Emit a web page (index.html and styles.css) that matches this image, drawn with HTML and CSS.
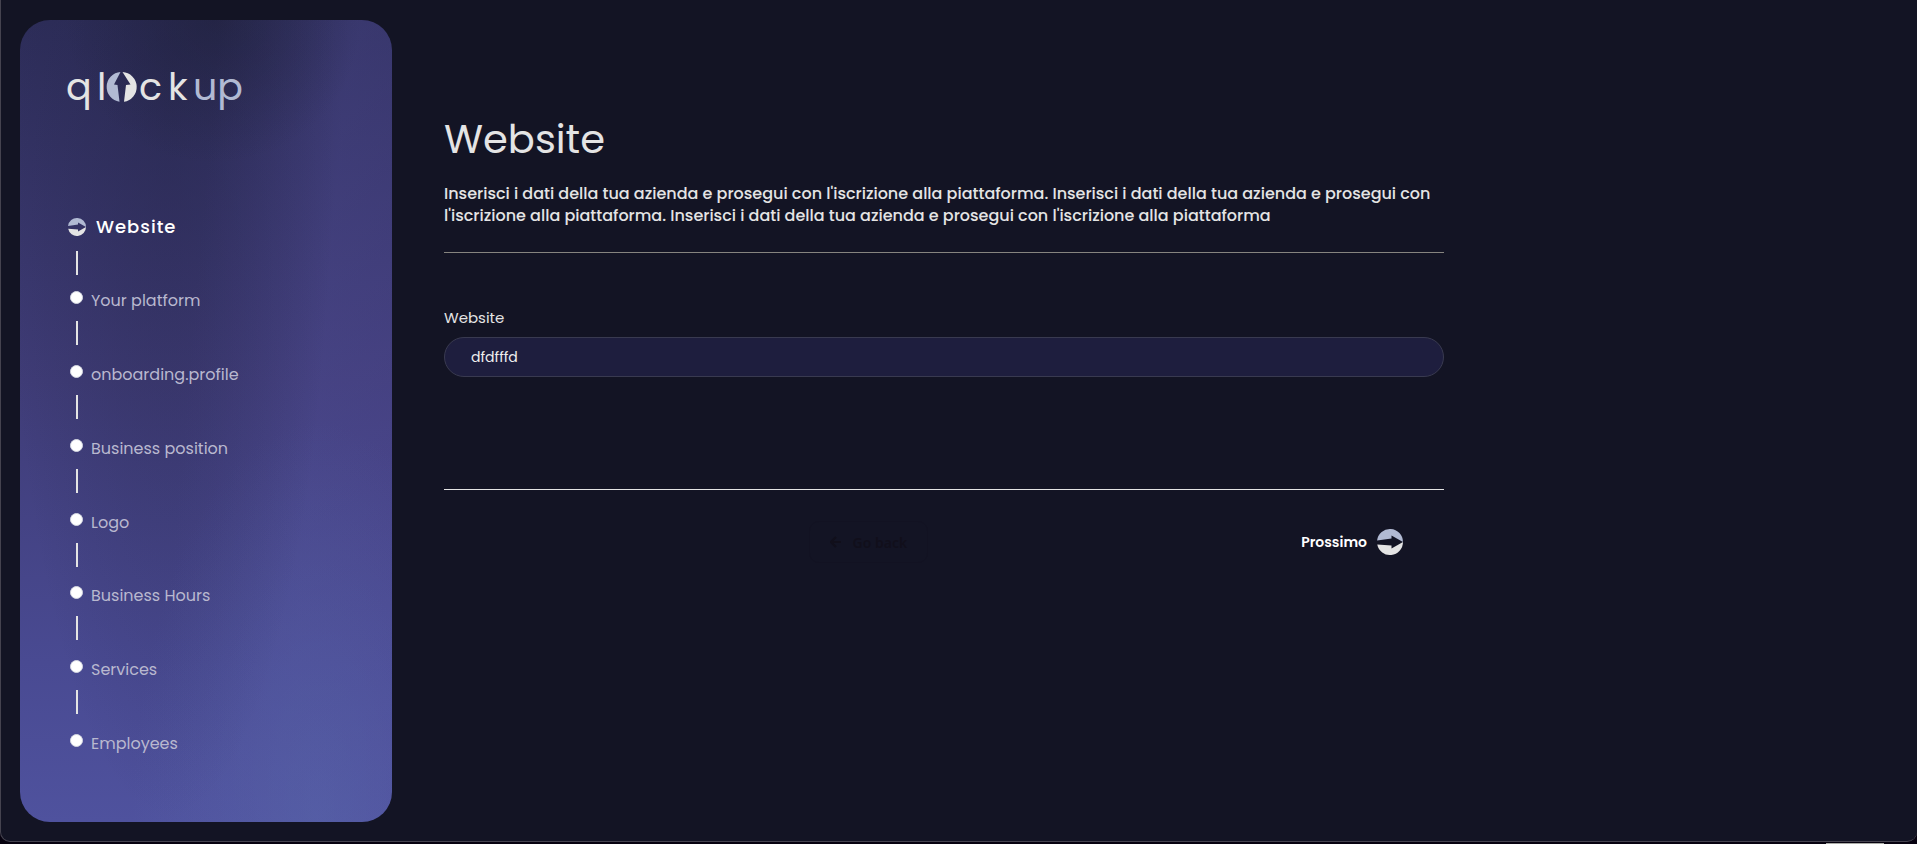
FILE: index.html
```html
<!DOCTYPE html>
<html lang="it">
<head>
    <meta charset="UTF-8">
    <meta name="viewport" content="width=device-width, initial-scale=1.0">
    <title>Qlockup - Website</title>
    <link rel="stylesheet" href="styles.css">
</head>
<body>
    <svg class="sprite" aria-hidden="true">
        <symbol id="arrow-ball" viewBox="0 0 26 26">
            <path class="ball-top" d="M0.087 11.5A13 13 0 0 1 26 13L14.500 6.500V9.500Z"/>
            <path class="ball-bottom" d="M26 13A13 13 0 0 1 0.243 15.500L14.500 16.500V19.500Z"/>
        </symbol>
    </svg>

    <div class="window">
        <aside class="sidebar">
            <svg class="logo" viewBox="0 0 178 44" role="img" aria-label="qlockup">
                <text class="logo-light" x="0" y="34">q</text>
                <text class="logo-light" x="31" y="34">l</text>
                <path class="logo-up" d="M54.500 6A15 15 0 0 0 53.500 35.800L51.500 19L48 18.500Z"/>
                <path class="logo-light" d="M56.500 6A15 15 0 0 1 58 35.800L60 19L64.500 18.500Z"/>
                <text class="logo-light" x="73" y="34">c</text>
                <text class="logo-light" x="102" y="34">k</text>
                <text class="logo-up" x="127" y="34">up</text>
            </svg>

            <ol class="steps">
                <li class="step active">
                    <svg class="step-icon"><use href="#arrow-ball"/></svg>
                    <span class="label">Website</span>
                </li>
                <li class="step"><span class="dot"></span><span class="label">Your platform</span></li>
                <li class="step"><span class="dot"></span><span class="label">onboarding.profile</span></li>
                <li class="step"><span class="dot"></span><span class="label">Business position</span></li>
                <li class="step"><span class="dot"></span><span class="label">Logo</span></li>
                <li class="step"><span class="dot"></span><span class="label">Business Hours</span></li>
                <li class="step"><span class="dot"></span><span class="label">Services</span></li>
                <li class="step"><span class="dot"></span><span class="label">Employees</span></li>
            </ol>
        </aside>

        <main class="content">
            <h1>Website</h1>
            <p class="intro">Inserisci i dati della tua azienda e prosegui con l'iscrizione alla piattaforma. Inserisci i dati della tua azienda e prosegui con l'iscrizione alla piattaforma. Inserisci i dati della tua azienda e prosegui con l'iscrizione alla piattaforma</p>

            <form class="form">
                <label for="website">Website</label>
                <input type="text" id="website" value="dfdfffd">
            </form>

            <div class="actions">
                <button type="button" class="back">
                    <svg viewBox="0 0 12 12"><path d="M11 6H1M6 1L1 6L6 11"/></svg>
                    Go back
                </button>
                <button type="button" class="next">
                    Prossimo
                    <svg><use href="#arrow-ball"/></svg>
                </button>
            </div>
        </main>
    </div>
    <div class="dock"></div>
</body>
</html>
```

FILE: styles.css
```css
* {
    box-sizing: border-box;
}
body {
    display: flex;
    flex-direction: column;
    min-height: 100vh;
    margin: 0;
    background: #06010f;
    color: #e4e4e4;
    font-family: Poppins, Inter, sans-serif;
    font-size: 16px;
}
.sprite {
    display: none;
}
.window {
    flex: 1;
    display: flex;
    gap: 52px;
    padding: 20px 19px 19px;
    background: #131424;
    border: 1px solid #45434f;
    border-top: none;
    border-right: none;
    border-radius: 0 0 10px 10px;
}

/* sidebar */
.sidebar {
    display: flex;
    flex-direction: column;
    flex: none;
    width: 372px;
    padding: 46px 46px 28px;
    border-radius: 30px;
    background:
        radial-gradient(ellipse 40% 18% at 52% 0%, rgba(26, 28, 48, 0.4), transparent),
        radial-gradient(ellipse 45% 90% at 40% 10%, rgba(36, 36, 72, 0.4), transparent),
        radial-gradient(ellipse 50% 50% at 80% 100%, rgba(90, 110, 175, 0.4), transparent),
        linear-gradient(95deg, transparent 45%, rgba(86, 82, 160, 0.3) 75%, rgba(86, 78, 160, 0.25)),
        linear-gradient(#2d2d59, #3f3c77 45%, #494a92 80%, #4f529e);
}
.logo {
    width: 178px;
    height: 44px;
    overflow: visible;
    font-size: 38px;
    font-weight: 400;
}
.logo-light,
.ball-bottom {
    fill: #e4e4e4;
}
.logo-up,
.ball-top {
    fill: #b1bad3;
}
.steps {
    flex: 1;
    display: flex;
    flex-direction: column;
    margin: 97px 0 0;
    padding: 0;
    list-style: none;
}
.step {
    position: relative;
    flex: 1;
    display: flex;
    align-items: flex-start;
    gap: 8px;
    padding: 10px 0 0 4px;
    color: #b9b8cf;
}
.step:not(:last-child)::after {
    content: "";
    position: absolute;
    top: 44px;
    left: 10px;
    width: 2px;
    height: 24px;
    background: #e4e4e4;
}
.step .label {
    line-height: 24px;
    padding-top: 2px;
}
.step.active {
    gap: 10px;
    padding: 6px 0 0 2px;
    color: #fff;
}
.step.active .label {
    font-size: 18px;
    font-weight: 500;
    letter-spacing: 1px;
}
.step-icon {
    width: 18px;
    height: 18px;
    margin-top: 5px;
}
.dot {
    width: 13px;
    height: 13px;
    margin-top: 4px;
    border: 1px solid #d5d8e2;
    border-radius: 50%;
    background: #fff;
}

/* content */
.content {
    flex: 1;
    max-width: 1000px;
    padding-top: 89px;
}
h1 {
    margin: 0;
    font-size: 40px;
    font-weight: 400;
    line-height: 60px;
}
.intro {
    margin: 0;
    padding: 14px 0 25px;
    border-bottom: 1px solid #86847f;
    font-weight: 500;
    line-height: 22px;
}
.form {
    display: flex;
    flex-direction: column;
    gap: 8px;
    padding: 54px 0 112px;
}
.form label {
    font-size: 15px;
    font-weight: 400;
    line-height: 22px;
}
.form input {
    width: 100%;
    height: 40px;
    padding: 0 26px;
    border: 1px solid #393a50;
    border-radius: 20px;
    background: #1e1e3e;
    color: #f0f0f0;
    font: inherit;
    font-size: 14px;
}
.actions {
    display: flex;
    justify-content: flex-end;
    align-items: center;
    gap: 373px;
    padding: 31px 41px 0;
    border-top: 1px solid #e4e4e4;
}
.actions button {
    display: flex;
    align-items: center;
    gap: 10px;
    padding: 0;
    border: none;
    background: none;
    cursor: pointer;
}
.actions .back {
    height: 42px;
    padding: 0 20px;
    border: 1px solid #121222;
    border-radius: 10px;
    color: #110f1b;
    font: 600 14px "Noto Sans", sans-serif;
}
.back svg {
    width: 12px;
    height: 12px;
    fill: none;
    stroke: #110f1b;
    stroke-width: 2;
}
.actions .next {
    color: #fff;
    font-family: inherit;
    font-size: 14px;
    font-weight: 600;
}
.next svg {
    width: 26px;
    height: 26px;
}

.dock {
    width: 58px;
    height: 2px;
    margin-right: 33px;
    align-self: flex-end;
    border-bottom: 1px solid #a9aba6;
}
```
